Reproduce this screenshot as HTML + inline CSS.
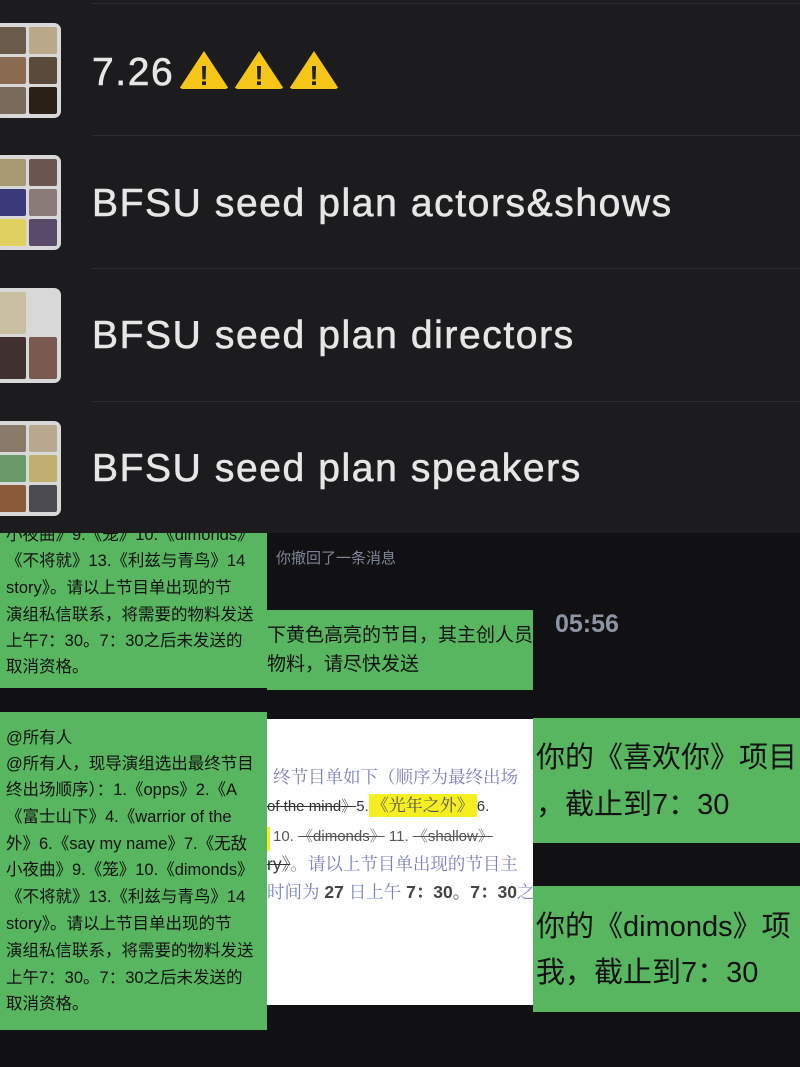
<!DOCTYPE html>
<html><head><meta charset="utf-8"><style>
*{margin:0;padding:0;box-sizing:border-box}
body{width:800px;height:1067px;background:#111113;position:relative;overflow:hidden;font-family:"Liberation Sans","Noto Sans CJK SC",sans-serif}
.top{position:absolute;left:0;top:0;width:800px;height:533px;background:#1c1c1e}
.sep{position:absolute;left:92px;right:0;height:1px;background:#2e2e31}
.av{position:absolute;left:-6px;width:67px;height:95px;background:#d8d8d8;border-radius:7px;padding:4px;display:grid;grid-template-columns:1fr 1fr;gap:3px}
.av i{display:block;border-radius:2px}
.t{position:absolute;left:92px;color:#e6e6e6;font-size:39px;line-height:40px;letter-spacing:1.6px;-webkit-text-stroke:0.6px #e6e6e6}
.warn{display:inline-block;width:0;height:0;border-left:25px solid transparent;border-right:25px solid transparent;border-bottom:38px solid #f5c518;position:relative;margin-left:5px;vertical-align:-4px;border-radius:4px}
.warn:after{content:"!";position:absolute;left:-5px;top:5px;font-size:28px;font-weight:bold;color:#222;-webkit-text-stroke:0}
.g{position:absolute;background:#57b65f;overflow:hidden}
.ln{position:absolute;white-space:nowrap;font-size:16.5px;color:#111;line-height:20px}
</style></head><body>
<div class="top">
<div class="sep" style="top:3px"></div>
<div class="sep" style="top:135px"></div>
<div class="sep" style="top:268px"></div>
<div class="sep" style="top:401px"></div>
<div class="av" style="top:23px"><i style="background:#6a5a4a"></i><i style="background:#b9a98a"></i><i style="background:#8a6a50"></i><i style="background:#5a4a3a"></i><i style="background:#7a6a5a"></i><i style="background:#2a2018"></i></div>
<div class="t" style="top:51px">7.26<span class="warn"></span><span class="warn"></span><span class="warn"></span></div>
<div class="av" style="top:155px"><i style="background:#a89a70"></i><i style="background:#6a5550"></i><i style="background:#3a3a7a"></i><i style="background:#8a7a78"></i><i style="background:#e0d060"></i><i style="background:#5a4a6a"></i></div>
<div class="t" style="top:184px">BFSU seed plan actors&amp;shows</div>
<div class="av" style="top:288px;grid-template-rows:1fr 1fr"><i style="background:#c8c0a0"></i><i style="background:#d8d8d8"></i><i style="background:#403030"></i><i style="background:#7a5a50"></i></div>
<div class="t" style="top:316px">BFSU seed plan directors</div>
<div class="av" style="top:421px"><i style="background:#8a7a6a"></i><i style="background:#b8a890"></i><i style="background:#6a9a6a"></i><i style="background:#c0b070"></i><i style="background:#8a5a3a"></i><i style="background:#4a4a50"></i></div>
<div class="t" style="top:449px">BFSU seed plan speakers</div>
</div>

<div class="g" style="left:0;top:533px;width:267px;height:155px">
<div class="ln" style="left:6px;top:-8px">小夜曲》9.《笼》10.《dimonds》</div>
<div class="ln" style="left:6px;top:18px">《不将就》13.《利兹与青鸟》14</div>
<div class="ln" style="left:6px;top:45px">story》。请以上节目单出现的节</div>
<div class="ln" style="left:6px;top:72px">演组私信联系，将需要的物料发送</div>
<div class="ln" style="left:6px;top:98px">上午7：30。7：30之后未发送的</div>
<div class="ln" style="left:6px;top:124px">取消资格。</div>
</div>
<div class="g" style="left:0;top:712px;width:267px;height:318px">
<div class="ln" style="left:6px;top:16px">@所有人</div>
<div class="ln" style="left:6px;top:42px">@所有人，现导演组选出最终节目</div>
<div class="ln" style="left:6px;top:68px">终出场顺序）：1.《opps》2.《A</div>
<div class="ln" style="left:6px;top:95px">《富士山下》4.《warrior of the</div>
<div class="ln" style="left:6px;top:122px">外》6.《say my name》7.《无敌</div>
<div class="ln" style="left:6px;top:148px">小夜曲》9.《笼》10.《dimonds》</div>
<div class="ln" style="left:6px;top:175px">《不将就》13.《利兹与青鸟》14</div>
<div class="ln" style="left:6px;top:202px">story》。请以上节目单出现的节</div>
<div class="ln" style="left:6px;top:229px">演组私信联系，将需要的物料发送</div>
<div class="ln" style="left:6px;top:256px">上午7：30。7：30之后未发送的</div>
<div class="ln" style="left:6px;top:282px">取消资格。</div>
</div>

<div style="position:absolute;left:276px;top:547px;font-size:15px;color:#7d8596">你撤回了一条消息</div>
<div class="g" style="left:267px;top:610px;width:266px;height:80px">
<div class="ln" style="left:0;top:16px;font-size:19px">下黄色高亮的节目，其主创人员</div>
<div class="ln" style="left:0;top:45px;font-size:19px">物料，请尽快发送</div>
</div>
<div style="position:absolute;left:267px;top:719px;width:266px;height:286px;background:#fff;overflow:hidden;font-family:'Liberation Sans','Noto Serif CJK SC',serif;color:#6a74b8">
<div class="ln" style="left:6px;top:48px;color:#7880c0;font-size:17.5px">终节目单如下（顺序为最终出场</div>
<div class="ln" style="left:0;top:77px;color:#333;font-size:15px"><s>of the mind》</s>5.<span style="background:#f5ee20;color:#555;padding:2px 3px;font-size:17px">《光年之外》</span>6.</div>
<div style="position:absolute;left:0;top:108px;width:3px;height:24px;background:#f5ee20"></div>
<div class="ln" style="left:6px;top:108px;color:#555;font-size:15px">10. <s>《dimonds》</s> 11. <s>《shallow》</s></div>
<div class="ln" style="left:0;top:135px;color:#7880c0;font-size:17.5px"><s style="color:#333">ry》</s>。请以上节目单出现的节目主</div>
<div class="ln" style="left:0;top:163px;color:#7880c0;font-size:17.5px">时间为 <b style="color:#444">27</b> 日上午 <b style="color:#444">7：30。7：30</b>之</div>
</div>

<div style="position:absolute;left:555px;top:610px;font-size:25px;color:#8d94a3;font-weight:bold">05:56</div>
<div class="g" style="left:533px;top:718px;width:267px;height:125px">
<div class="ln" style="left:3px;top:25px;font-size:29px;line-height:30px">你的《喜欢你》项目</div>
<div class="ln" style="left:3px;top:72px;font-size:29px;line-height:30px">，截止到7：30</div>
</div>
<div class="g" style="left:533px;top:886px;width:267px;height:126px">
<div class="ln" style="left:3px;top:26px;font-size:29px;line-height:30px">你的《dimonds》项</div>
<div class="ln" style="left:3px;top:72px;font-size:29px;line-height:30px">我，截止到7：30</div>
</div>
</body></html>
